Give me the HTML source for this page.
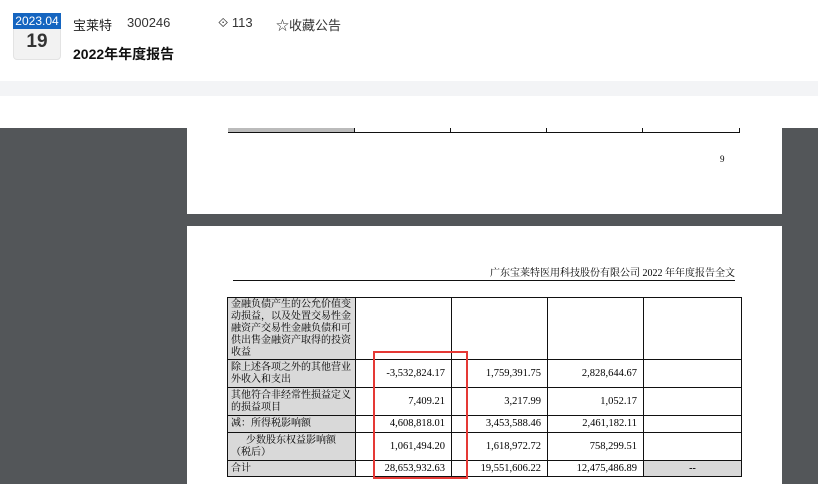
<!DOCTYPE html>
<html><head><meta charset="utf-8"><style>
*{margin:0;padding:0;box-sizing:border-box}
body{width:818px;height:484px;overflow:hidden;background:#fff;position:relative;font-family:"Liberation Sans","Noto Sans CJK SC",sans-serif}
.abs{position:absolute}
.dark{background:#535659}
.page{background:#fff;position:absolute;left:187px;width:595px}
table{border-collapse:collapse;position:absolute;font-family:"Liberation Serif","Noto Serif CJK SC",serif;font-size:10px;color:#000;table-layout:fixed}
td{border:1px solid #111;padding:0 3px;vertical-align:middle;line-height:12px;overflow:hidden;white-space:nowrap}
td.l{background:#d9d9d9}
td.n{text-align:right;padding-right:6px;font-size:10.5px}
</style></head><body>
<div class="abs" style="left:13px;top:13px;width:48px;height:47px;background:#f2f2f2;border-radius:4px;border:1px solid #e3e3e3"></div>
<div class="abs" style="left:13px;top:13px;width:48px;height:16px;background:#1565c0;color:#fff;font-size:12px;text-align:center;line-height:16px">2023.04</div>
<div class="abs" style="left:13px;top:31px;width:48px;text-align:center;font-size:19px;font-weight:bold;color:#333">19</div>
<div class="abs" style="left:73px;top:15px;font-size:13px;color:#222">宝莱特</div>
<div class="abs" style="left:127px;top:15px;font-size:13px;color:#333">300246</div>
<div class="abs" style="left:218px;top:15px;font-size:13px;color:#333">⟐ 113</div>
<div class="abs" style="left:276px;top:15px;font-size:13px;color:#333">☆收藏公告</div>
<div class="abs" style="left:73px;top:44px;font-size:14px;font-weight:bold;color:#111">2022年年度报告</div>
<div class="abs" style="left:0;top:81px;width:818px;height:15px;background:#f3f4f6"></div>
<div class="abs dark" style="left:0;top:128px;width:818px;height:356px"></div>
<div class="page" style="top:96px;height:118px">
<div class="abs" style="left:41px;top:32px;width:512px;height:5px;border:1px solid #111;border-top:none"></div>
<div class="abs" style="left:41px;top:32px;width:127px;height:4px;background:#bbb"></div>
<div class="abs" style="left:167px;top:32px;width:1px;height:5px;background:#111"></div>
<div class="abs" style="left:263px;top:32px;width:1px;height:5px;background:#111"></div>
<div class="abs" style="left:359px;top:32px;width:1px;height:5px;background:#111"></div>
<div class="abs" style="left:455px;top:32px;width:1px;height:5px;background:#111"></div>
<div class="abs" style="left:533px;top:58px;font-size:9px;font-family:'Liberation Serif',serif">9</div>
</div>
<div class="page" style="top:226px;height:258px">
<div class="abs" style="right:47px;top:38px;font-size:10px;font-family:'Liberation Serif','Noto Serif CJK SC',serif;color:#000">广东宝莱特医用科技股份有限公司 2022 年年度报告全文</div>
<div class="abs" style="left:46px;top:54px;width:502px;height:1px;background:#111"></div>
</div>
<table style="left:227px;top:297px;width:514px">
<col style="width:128px"><col style="width:96px"><col style="width:96px"><col style="width:96px"><col style="width:98px">
<tr style="height:62px"><td class="l">金融负债产生的公允价值变<br>动损益，以及处置交易性金<br>融资产交易性金融负债和可<br>供出售金融资产取得的投资<br>收益</td><td></td><td></td><td></td><td></td></tr>
<tr style="height:28px"><td class="l">除上述各项之外的其他营业<br>外收入和支出</td><td class="n">-3,532,824.17</td><td class="n">1,759,391.75</td><td class="n">2,828,644.67</td><td></td></tr>
<tr style="height:28px"><td class="l">其他符合非经常性损益定义<br>的损益项目</td><td class="n">7,409.21</td><td class="n">3,217.99</td><td class="n">1,052.17</td><td></td></tr>
<tr style="height:17px"><td class="l">减：所得税影响额</td><td class="n">4,608,818.01</td><td class="n">3,453,588.46</td><td class="n">2,461,182.11</td><td></td></tr>
<tr style="height:28px"><td class="l">&nbsp;&nbsp;&nbsp;&nbsp;&nbsp;&nbsp;少数股东权益影响额<br>（税后）</td><td class="n">1,061,494.20</td><td class="n">1,618,972.72</td><td class="n">758,299.51</td><td></td></tr>
<tr style="height:16px"><td class="l">合计</td><td class="n">28,653,932.63</td><td class="n">19,551,606.22</td><td class="n">12,475,486.89</td><td style="background:#d9d9d9;text-align:center;font-weight:bold">--</td></tr>
</table>
<div class="abs" style="left:373px;top:351px;width:95px;height:128px;border:2px solid #e53935"></div>
</body></html>
